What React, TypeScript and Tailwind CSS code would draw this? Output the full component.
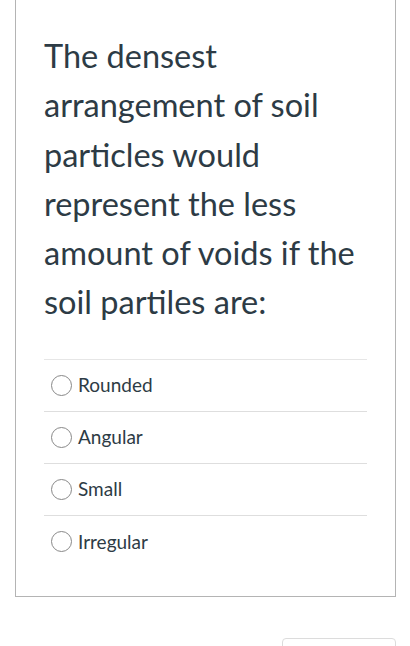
import React from "react";

const options = ["Rounded", "Angular", "Small", "Irregular"];

export default function App() {
  return (
    <div className="w-[410px] h-[646px] overflow-hidden bg-white" style={{ fontFamily: "Lato, 'Noto Sans', sans-serif" }}>
      <div className="ml-[15px] w-[381px] h-[597px] border-x border-b border-[#b4b4b4] px-[28px] pt-[31px]">
        <p className="text-[32.5px] leading-[49.3px] text-[#2d3b45]">
          The densest arrangement of soil particles would represent the less amount of voids if the soil partiles are:
        </p>
        <div className="mt-[32px] border-t border-[#e6e6e6]">
          {options.map((o) => (
            <div key={o} className="h-[52px] border-b border-[#dedede] last:border-b-0 flex items-center pl-[7px] gap-[6px]">
              <span className="w-[21px] h-[21px] rounded-full border-[1.5px] border-[#888] box-border" />
              <span className="text-[19px] text-[#2d3b45]">{o}</span>
            </div>
          ))}
        </div>
      </div>
      <div className="flex justify-end pr-[14px] mt-[41px]">
        <div className="w-[114px] h-[40px] rounded-[4px] border border-[#dcdcdc] bg-white" />
      </div>
    </div>
  );
}
